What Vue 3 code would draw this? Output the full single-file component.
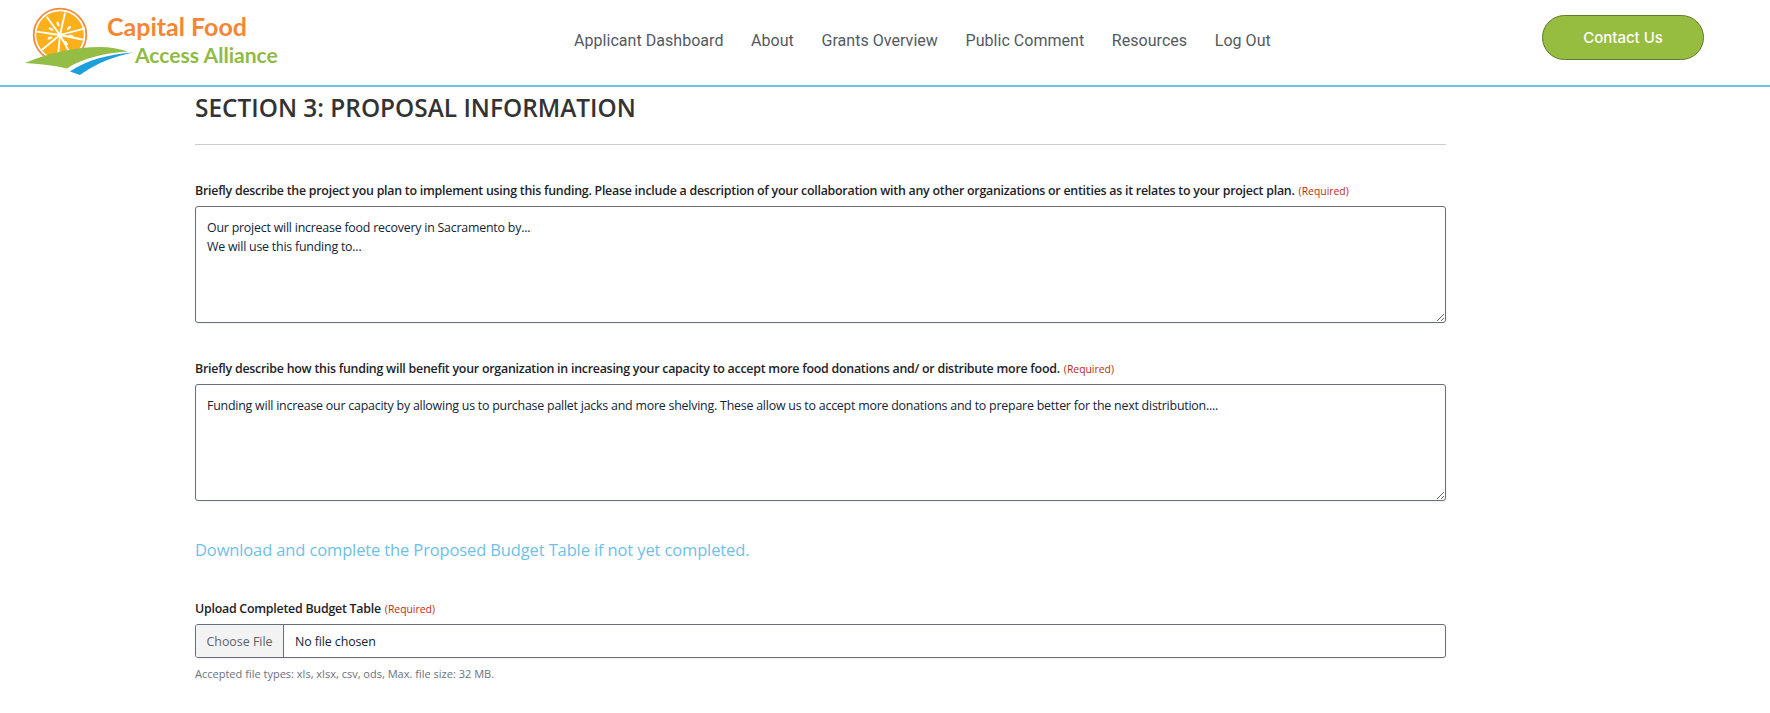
<script setup>
const navItems = ['Applicant Dashboard', 'About', 'Grants Overview', 'Public Comment', 'Resources', 'Log Out']
const spokes = [
  [46.7, 16.7], [65, 12.7], [85, 28.3], [85, 40], [70, 53.3], [58.3, 53.3], [36.7, 31.7], [41.7, 50]
]
const seeds = [
  [58, 24, 70], [69, 28, -40], [71, 36, 10], [66, 43, 50], [50, 38, -20], [51, 29, 25]
]
</script>

<template>
  <div class="page">
    <header class="site-header">
      <svg class="logo" viewBox="0 0 290 85" width="290" height="85" role="img" aria-label="Capital Food Access Alliance">
        <circle cx="60" cy="35" r="26.3" fill="#fff" stroke="#f58a3c" stroke-width="1.8" />
        <circle cx="60" cy="35" r="23.8" fill="#fdb01c" />
        <line v-for="(s, i) in spokes" :key="i" x1="60" y1="35" :x2="s[0]" :y2="s[1]" stroke="#fff" stroke-width="1.8" />
        <ellipse v-for="(s, i) in seeds" :key="'s' + i" :cx="s[0]" :cy="s[1]" rx="2.6" ry="1.2" fill="#fff" :transform="`rotate(${s[2]} ${s[0]} ${s[1]})`" />
        <circle cx="60" cy="35" r="2.2" fill="#fff" />
        <path d="M25 63 C48 53 76 47 100 47 C110 47 120 49 128 51.5 C105 53 82 58 67 68.5 C52 65 38 64 25 63 Z" fill="#93bd45" />
        <path d="M70 71.5 C86 60 110 54 133 52.5 C116 56 96 63 80 75 Z" fill="#1d9fdb" />
        <text x="107" y="36" class="logo-top">Capital Food</text>
        <text x="135" y="63" class="logo-bottom">Access Alliance</text>
      </svg>
      <nav class="main-nav">
        <a v-for="item in navItems" :key="item" class="nav-link">{{ item }}</a>
      </nav>
      <a class="contact-btn">Contact Us</a>
    </header>

    <main class="form-area">
      <h2 class="section-title">SECTION 3: PROPOSAL INFORMATION</h2>
      <hr class="divider" />

      <label class="field-label">Briefly describe the project you plan to implement using this funding. Please include a description of your collaboration with any other organizations or entities as it relates to your project plan. <span class="req">(Required)</span></label>
      <textarea class="text-box">Our project will increase food recovery in Sacramento by...
We will use this funding to...</textarea>

      <label class="field-label">Briefly describe how this funding will benefit your organization in increasing your capacity to accept more food donations and/ or distribute more food. <span class="req">(Required)</span></label>
      <textarea class="text-box">Funding will increase our capacity by allowing us to purchase pallet jacks and more shelving. These allow us to accept more donations and to prepare better for the next distribution....</textarea>

      <a class="budget-link">Download and complete the Proposed Budget Table if not yet completed.</a>

      <label class="field-label">Upload Completed Budget Table <span class="req">(Required)</span></label>
      <div class="file-box">
        <button type="button" class="file-btn">Choose File</button>
        <span class="file-name">No file chosen</span>
      </div>
      <p class="help">Accepted file types: xls, xlsx, csv, ods, Max. file size: 32 MB.</p>
    </main>
  </div>
</template>

<style>
html, body { margin: 0; background: #fff; }
</style>

<style scoped>
.page {
  width: 1770px;
  height: 713px;
  overflow: hidden;
  background: #fff;
  font-family: "Open Sans", "Noto Sans", sans-serif;
}
.site-header {
  box-sizing: content-box;
  height: 85px;
  display: flex;
  align-items: center;
  border-bottom: 2px solid #6ec1e8;
}
.logo { flex: none; display: block; }
.logo-top {
  font-family: Lato, sans-serif;
  font-weight: 700;
  font-size: 25px;
  fill: #f58634;
}
.logo-bottom {
  font-family: Lato, sans-serif;
  font-weight: 700;
  font-size: 21.1px;
  fill: #8fbb45;
}
.main-nav {
  display: flex;
  gap: 27.6px;
  margin-left: 284px;
  margin-top: -4px;
}
.nav-link {
  font-family: Roboto, sans-serif;
  font-size: 16px;
  letter-spacing: 0.04px;
  color: #54595f;
  white-space: nowrap;
}
.contact-btn {
  box-sizing: border-box;
  width: 162px;
  height: 45px;
  margin-left: auto;
  margin-right: 66px;
  margin-top: -10px;
  padding-bottom: 1px;
  display: flex;
  align-items: center;
  justify-content: center;
  border: 1px solid #5f7a2c;
  border-radius: 23px;
  background: #96bc40;
  color: #fff;
  font-family: Inter, sans-serif;
  font-weight: 500;
  font-size: 15px;
}
.form-area {
  width: 1251px;
  margin-left: 195px;
  display: flex;
  flex-direction: column;
  align-items: stretch;
}
.section-title {
  margin: 4px 0 0;
  font-size: 24.4px;
  line-height: 34px;
  font-weight: 600;
  color: #333;
}
.divider {
  width: 100%;
  margin: 19px 0 0;
  border: 0;
  border-top: 1px solid #ccc;
}
.field-label {
  display: block;
  margin-top: 37px;
  margin-bottom: 6px;
  font-size: 12.4px;
  letter-spacing: -0.245px;
  line-height: 18px;
  font-weight: 600;
  color: #1d2327;
  white-space: nowrap;
}
.req {
  margin-left: 1px;
  font-size: 10.4px;
  letter-spacing: 0;
  font-weight: 400;
  color: #c02b0a;
}
.text-box {
  box-sizing: border-box;
  display: block;
  width: 100%;
  height: 117px;
  padding: 11px 11px;
  border: 1px solid #686e77;
  border-radius: 3px;
  font-family: "Open Sans", "Noto Sans", sans-serif;
  font-size: 12.4px;
  letter-spacing: -0.22px;
  line-height: 19px;
  color: #112337;
  background: #fff;
  box-shadow: 0 1px 2px rgba(28, 39, 60, 0.05);
  outline: none;
}
.budget-link {
  margin-top: 36px;
  font-size: 16.5px;
  letter-spacing: -0.13px;
  line-height: 26px;
  color: #6ec1e8;
}
.file-box {
  box-sizing: border-box;
  display: flex;
  align-items: center;
  height: 34px;
  border: 1px solid #686e77;
  border-radius: 3px;
  background: #fff;
  box-shadow: 0 1px 2px rgba(28, 39, 60, 0.05);
  overflow: hidden;
}
.file-btn {
  align-self: stretch;
  width: 88px;
  padding: 0;
  border: 0;
  border-right: 1px solid #686e77;
  background: #f3f3f3;
  color: #5a6268;
  font-family: "Open Sans", "Noto Sans", sans-serif;
  font-size: 12.4px;
}
.file-name {
  margin-left: 11px;
  padding-top: 1px;
  font-size: 12.4px;
  letter-spacing: -0.1px;
  color: #112337;
}
.help {
  margin: 7px 0 0;
  font-size: 11.03px;
  line-height: 18px;
  color: #6b7280;
}
</style>
